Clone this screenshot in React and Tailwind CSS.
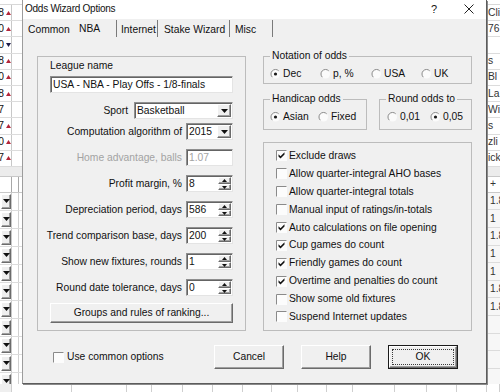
import React from "react";

const sunken =
  "border border-t-[#8f8f8f] border-l-[#8f8f8f] border-r-[#e4e4e4] border-b-[#e4e4e4] shadow-[inset_1px_1px_0_#646464]";
const raised =
  "border border-t-white border-l-white border-r-[#6b6b6b] border-b-[#6b6b6b] shadow-[inset_-1px_-1px_0_#a0a0a0]";

function Radio({ on }) {
  return (
    <svg width="13" height="12" viewBox="0 0 13 12" className="shrink-0">
      <circle cx="5.5" cy="6" r="4.5" fill="#fbfbfb" />
      <path d="M2.3 9.2A4.5 4.5 0 0 1 8.7 2.8" fill="none" stroke="#8a8a8a" />
      {on && <circle cx="5.5" cy="6" r="1.6" fill="#1a1a1a" />}
    </svg>
  );
}

function Check({ on }) {
  return (
    <svg width="11" height="11" viewBox="0 0 11 11" className="shrink-0">
      <rect width="11" height="11" fill="#fcfcfc" />
      <path d="M0.5 10.5V0.5H10.5" fill="none" stroke="#8a8a8a" />
      {on && <path d="M2.5 4.3l2 2 4-4v2.2l-4 4-2-2z" fill="#111" />}
    </svg>
  );
}

function Arrow({ up, small }) {
  const w = small ? 5 : 7;
  const h = small ? 3 : 4;
  return (
    <svg width={w} height={h} viewBox={`0 0 ${w} ${h}`} className="block">
      <path d={up ? `M${w / 2} 0L${w} ${h}H0z` : `M0 0h${w}L${w / 2} ${h}z`} fill="#111" />
    </svg>
  );
}

function Combo({ value, className }) {
  return (
    <div className={`h-[17px] shrink-0 bg-white flex p-[1px] ${sunken} ${className}`}>
      <span className="flex-1 pl-[1px] leading-[13px] truncate">{value}</span>
      <span className={`w-[14px] h-[13px] bg-[#f0f0f0] flex items-center justify-center ${raised}`}>
        <Arrow />
      </span>
    </div>
  );
}

function Edit({ value, gray }) {
  return (
    <div className={`h-[17px] w-[47px] shrink-0 bg-white p-[1px] pl-[2px] leading-[13px] ${sunken} ${gray ? "text-[#a3a3a3]" : ""}`}>
      {value}
    </div>
  );
}

function Spin({ value }) {
  return (
    <div className={`h-[17px] w-[47px] shrink-0 bg-white flex p-[1px] ${sunken}`}>
      <span className="flex-1 pl-[1px] leading-[13px]">{value}</span>
      <span className="w-[13px] h-[13px] flex flex-col">
        <span className={`h-[7px] bg-[#f0f0f0] flex items-center justify-center ${raised}`}>
          <Arrow up small />
        </span>
        <span className={`h-[6px] bg-[#f0f0f0] flex items-center justify-center ${raised}`}>
          <Arrow small />
        </span>
      </span>
    </div>
  );
}

function Btn({ children, def }) {
  if (def) {
    return (
      <div className="w-[70px] h-[24px] border border-[#1a1a1a] flex">
        <div className={`flex-1 bg-[#f0f0f0] p-[2px] ${raised}`}>
          <div className="h-full border border-dotted border-[#3a3a3a] flex items-center justify-center">
            {children}
          </div>
        </div>
      </div>
    );
  }
  return (
    <div className={`w-[70px] h-[24px] bg-[#f0f0f0] flex items-center justify-center ${raised}`}>
      {children}
    </div>
  );
}

function Group({ title, className, children }) {
  return (
    <fieldset className={`border border-[#bcbcbc] ${className}`}>
      <legend className="ml-[6px] px-[2px] leading-[12px]">{title}</legend>
      {children}
    </fieldset>
  );
}

const fields = [
  { label: "Computation algorithm of", el: <Combo value="2015" className="w-[47px]" /> },
  { label: "Home advantage, balls", el: <Edit value="1.07" gray />, gray: true },
  { label: "Profit margin, %", el: <Spin value="8" /> },
  { label: "Depreciation period, days", el: <Spin value="586" /> },
  { label: "Trend comparison base, days", el: <Spin value="200" /> },
  { label: "Show new fixtures, rounds", el: <Spin value="1" /> },
  { label: "Round date tolerance, days", el: <Spin value="0" /> },
];

const checks = [
  ["Exclude draws", true],
  ["Allow quarter-integral AHO bases", false],
  ["Allow quarter-integral totals", false],
  ["Manual input of ratings/in-totals", false],
  ["Auto calculations on file opening", true],
  ["Cup games do count", true],
  ["Friendly games do count", true],
  ["Overtime and penalties do count", true],
  ["Show some old fixtures", false],
  ["Suspend Internet updates", false],
];

const leftTop = [
  ["8", "up"], ["0", "up"], ["0", "down"], ["8", "up"], ["0", "up"],
  ["8", "up"], ["7", null], ["7", "up"], ["0", "up"], ["7", "up"],
];

const rightTop = ["Cli", "76", "", "s", "Bl", "La", "Wiz", "s", "zli", "ick"];
const rightNums = ["1.8", "1", "1.8", "1", "1", "1.8", "1.8", "", "", "", ""];
const bottomCells = [12, 60, 55, 25, 31, 30, 30, 29, 26, 29, 26, 42, 32, 30, 30, 13];

function Tri({ dir }) {
  if (!dir) return null;
  return (
    <svg width="5" height="4" viewBox="0 0 5 4" className="ml-[2px]">
      <path d={dir === "up" ? "M2.5 0L5 4H0z" : "M0 0h5L2.5 4z"} fill={dir === "up" ? "#b3263a" : "#1c1c4a"} />
    </svg>
  );
}

function LeftStrip() {
  return (
    <div className="w-[22px] h-full overflow-hidden flex flex-col bg-white">
      <div className="h-[5px] shrink-0 border-b border-[#d8d8d8]" />
      {leftTop.map(([d, t], i) => (
        <div key={i} className="h-[16.2px] shrink-0 flex border-b border-[#dcdcdc]">
          <div className="w-[12px] flex items-center border-r border-[#c8c8c8]">
            <span className="w-[4px] overflow-hidden flex justify-end leading-[12px]">{d}</span>
            <Tri dir={t} />
          </div>
        </div>
      ))}
      <div className="h-[10px] shrink-0 bg-[#ececec] border-b border-[#c8c8c8]" />
      <div className="h-[16px] shrink-0 flex border-b border-[#c8c8c8]">
        <div className="w-[12px] border-r border-[#a8a8a8]" />
        <div className="w-[7px] border-r border-[#a8a8a8]" />
      </div>
      {Array.from({ length: 11 }).map((_, i) => (
        <div key={i} className="h-[18px] shrink-0 flex border-b border-[#dcdcdc]">
          <div className="w-[12px] p-[1px] border-r border-[#c8c8c8]">
            <div className={`h-full w-[10px] bg-[#efefef] flex items-center justify-center ${raised}`}>
              <Arrow />
            </div>
          </div>
          <div className="w-[7px] border-r border-[#d0d0d0]" />
        </div>
      ))}
    </div>
  );
}

function RightStrip() {
  return (
    <div className="w-[13px] h-full overflow-hidden flex flex-col bg-white whitespace-nowrap text-[#333]">
      <div className="h-[5px] shrink-0 border-b border-[#d8d8d8]" />
      {rightTop.map((t, i) => (
        <div key={i} className="h-[16.2px] shrink-0 pl-[1px] flex items-center border-b border-[#dcdcdc]">
          {t}
        </div>
      ))}
      <div className="h-[10px] shrink-0 bg-[#ececec] border-b border-[#c8c8c8]" />
      <div className="h-[16px] shrink-0 pl-[3px] flex items-center border-b border-[#c8c8c8]">+</div>
      {rightNums.map((t, i) => (
        <div key={i} className="h-[17.6px] shrink-0 pl-[3px] flex items-center bg-[#f7f7f7] border-b border-[#dcdcdc]">
          {t}
        </div>
      ))}
    </div>
  );
}

function Dialog() {
  return (
    <div className="relative z-10 w-[465px] h-full flex flex-col bg-[#f0f0f0] border-l border-[#9c9c9c] border-r border-r-[#5c5c5c] border-b border-b-[#5c5c5c] shadow-[1px_1px_0_#8a8a8a] whitespace-nowrap">
      <div className="h-[19px] shrink-0 bg-white flex items-center">
        <span className="flex-1 pl-[2px] pb-[2px] text-[10px] tracking-[-0.25px]">Odds Wizard Options</span>
        <span className="w-[36px] pb-[2px] text-center text-[11px]">?</span>
        <span className="w-[34px] pb-[2px] flex justify-center">
          <svg width="10" height="10" viewBox="0 0 10 10">
            <path d="M0.5 0.5l9 9M9.5 0.5l-9 9" stroke="#222" />
          </svg>
        </span>
      </div>

      <div className="h-[19px] shrink-0 flex">
        <div className="w-[49px] pl-[5px] pt-[2px] flex items-center">Common</div>
        <div className="w-[45px] pl-[7px] flex items-center border-r border-[#7a7a7a] my-[1px]">NBA</div>
        <div className="w-[41px] pl-[4px] pt-[2px] flex items-center border-r border-[#7a7a7a] my-[1px]">Internet</div>
        <div className="w-[72px] pl-[6px] pt-[2px] flex items-center border-r border-[#7a7a7a] my-[1px]">Stake Wizard</div>
        <div className="w-[43px] pl-[5px] pt-[2px] flex items-center border-r border-[#7a7a7a] my-[1px]">Misc</div>
      </div>

      <div className="flex px-[14px] pt-[12px] gap-[17px]">
        <div className="mt-[6px] w-[209px] h-[275px] border border-[#bcbcbc] px-[12px] flex flex-col">
          <div className="mt-[3px] h-[12px] leading-[12px]">League name</div>
          <div className={`mt-[4px] h-[17px] w-full bg-white p-[1px] pl-[2px] leading-[13px] ${sunken}`}>
            USA - NBA - Play Offs - 1/8-finals
          </div>
          <div className="mt-[9px] h-[17px] flex items-center justify-end gap-[6px]">
            <span>Sport</span>
            <Combo value="Basketball" className="w-[99px]" />
          </div>
          <div className="mt-[4px] flex flex-col gap-[9px]">
            {fields.map((f) => (
              <div key={f.label} className="h-[17px] flex items-center justify-end gap-[4px]">
                <span className={`shrink-0 ${f.gray ? "text-[#a3a3a3]" : ""}`}>{f.label}</span>
                {f.el}
              </div>
            ))}
          </div>
          <div className={`mt-[7px] h-[20px] bg-[#f0f0f0] flex items-center justify-center ${raised}`}>
            Groups and rules of ranking...
          </div>
        </div>

        <div className="w-[209px] flex flex-col">
          <Group title="Notation of odds">
            <div className="mt-[5px] mb-[2px] h-[14px] pl-[6px] flex items-center">
              <div className="w-[50px] flex items-center"><Radio on /><span>Dec</span></div>
              <div className="w-[51px] flex items-center"><Radio /><span>p, %</span></div>
              <div className="w-[50px] flex items-center"><Radio /><span>USA</span></div>
              <div className="flex items-center"><Radio /><span>UK</span></div>
            </div>
          </Group>
          <div className="mt-[9px] flex gap-[12px]">
            <Group title="Handicap odds" className="w-[104px]">
              <div className="mt-[5px] mb-[5px] h-[14px] pl-[6px] flex items-center">
                <div className="w-[48px] flex items-center"><Radio on /><span>Asian</span></div>
                <div className="flex items-center"><Radio /><span>Fixed</span></div>
              </div>
            </Group>
            <Group title="Round odds to" className="w-[93px]">
              <div className="mt-[5px] mb-[5px] h-[14px] pl-[7px] flex items-center">
                <div className="w-[43px] flex items-center"><Radio /><span>0,01</span></div>
                <div className="flex items-center"><Radio on /><span>0,05</span></div>
              </div>
            </Group>
          </div>
          <div className="mt-[12px] h-[189px] border border-[#bcbcbc] pt-[4px] pl-[12px] flex flex-col">
            {checks.map(([t, on]) => (
              <div key={t} className="h-[17.9px] flex items-center gap-[2px]">
                <Check on={on} />
                <span>{t}</span>
              </div>
            ))}
          </div>
        </div>
      </div>

      <div className="mt-[14px] h-[24px] flex items-center pl-[30px] pr-[28px]">
        <div className="flex-1 flex items-center gap-[3px]">
          <Check />
          <span>Use common options</span>
        </div>
        <div className="flex gap-[17px]">
          <Btn>Cancel</Btn>
          <Btn>Help</Btn>
          <Btn def>OK</Btn>
        </div>
      </div>
    </div>
  );
}

export default function App() {
  return (
    <div className="w-[500px] h-[392px] overflow-hidden bg-white flex flex-col text-[10.3px] leading-[12px] text-[#111] font-['Liberation_Sans',Arial,sans-serif]">
      <div className="h-[384px] flex shrink-0">
        <LeftStrip />
        <Dialog />
        <RightStrip />
      </div>
      <div className="h-[8px] flex">
        {bottomCells.map((w, i) => (
          <div
            key={i}
            className={`h-full border-r border-[#cfcfcf] ${i === 0 ? "bg-[#efefef]" : "bg-white"}`}
            style={{ width: w }}
          />
        ))}
      </div>
    </div>
  );
}
